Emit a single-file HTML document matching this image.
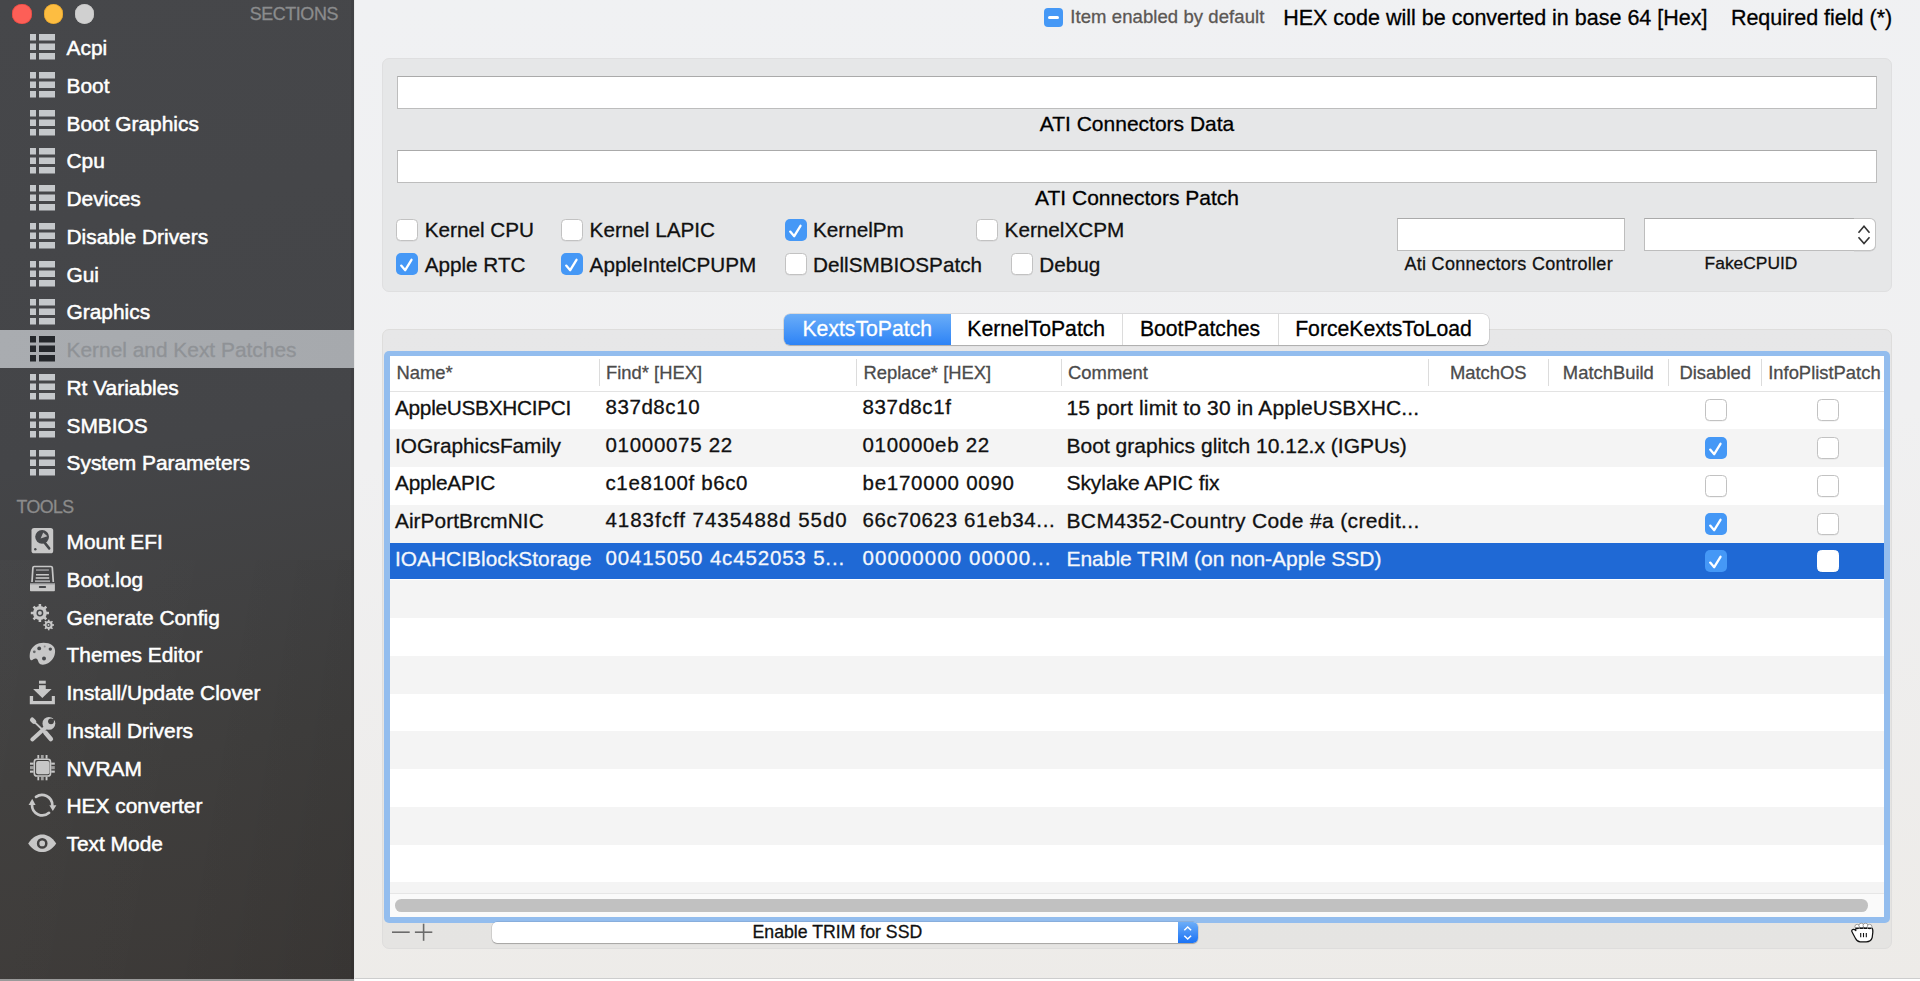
<!DOCTYPE html>
<html><head><meta charset="utf-8"><title>Clover Configurator</title>
<style>
html,body{margin:0;padding:0;width:1920px;height:981px;overflow:hidden;background:#f0f0f0;}
body{position:relative;font-family:"Liberation Sans",sans-serif;}
.r{position:absolute;}
.t{position:absolute;white-space:nowrap;-webkit-text-stroke-width:0.3px;}
.cb{position:absolute;background:#fff;border:1px solid #c2c2c2;border-radius:4.5px;box-shadow:0 0.5px 0.5px rgba(0,0,0,0.08);}
.cb.on{background:#4598f6;border:none;box-shadow:none;border-radius:5px;}
.cb svg{position:absolute;left:0;top:0;}
#tbl .t, #tbl .r, #tbl .cb{position:absolute;}
</style></head><body>
<div class="r" style="left:0px;top:0px;width:354px;height:981px;background:linear-gradient(170deg,#46474a 0%,#444548 45%,#3f3e3d 75%,#3c3937 100%);"></div>
<div class="r" style="left:0px;top:560px;width:354px;height:419px;background:linear-gradient(100deg,rgba(255,255,255,0.015) 0%,rgba(255,255,255,0) 55%,rgba(0,0,0,0.07) 100%);"></div>
<div class="r" style="left:351px;top:0px;width:3px;height:979px;background:rgba(0,0,0,0.06);"></div>
<div class="r" style="left:354px;top:0px;width:1px;height:979px;background:#e7e8e8;"></div>
<div class="r" style="left:0px;top:979px;width:354px;height:2px;background:#9a9a9a;"></div>
<div class="r" style="left:12.4px;top:4.4px;width:19.2px;height:19.2px;border-radius:50%;background:#fd5f57;box-shadow:inset 0 0 0 0.6px #e2463f;"></div>
<div class="r" style="left:43.7px;top:4.4px;width:19.2px;height:19.2px;border-radius:50%;background:#fdbd41;box-shadow:inset 0 0 0 0.6px #dfa02a;"></div>
<div class="r" style="left:75.2px;top:4.4px;width:19.2px;height:19.2px;border-radius:50%;background:#d0d0d0;box-shadow:inset 0 0 0 0.6px #c4c4c4;"></div>
<div class="t" style="left:249.7px;top:4.40px;font-size:17.9px;line-height:19.99px;color:#8b8c8d;letter-spacing:-0.4px;">SECTIONS</div>
<div class="r" style="left:30px;top:34.40px;"><svg width="26" height="27" viewBox="0 0 26 27"><g fill="#c5c8cb"><rect x="0" y="0" width="6" height="6.5"/><rect x="9" y="0" width="16" height="6.5"/><rect x="0" y="9.5" width="6" height="6.5"/><rect x="9" y="9.5" width="16" height="6.5"/><rect x="0" y="19" width="6" height="6.5"/><rect x="9" y="19" width="16" height="6.5"/></g></svg></div>
<div class="t" style="left:66.5px;top:36.08px;font-size:20.9px;line-height:23.35px;color:#ffffff;-webkit-text-stroke-width:0.5px;">Acpi</div>
<div class="r" style="left:30px;top:72.15px;"><svg width="26" height="27" viewBox="0 0 26 27"><g fill="#c5c8cb"><rect x="0" y="0" width="6" height="6.5"/><rect x="9" y="0" width="16" height="6.5"/><rect x="0" y="9.5" width="6" height="6.5"/><rect x="9" y="9.5" width="16" height="6.5"/><rect x="0" y="19" width="6" height="6.5"/><rect x="9" y="19" width="16" height="6.5"/></g></svg></div>
<div class="t" style="left:66.5px;top:73.83px;font-size:20.9px;line-height:23.35px;color:#ffffff;-webkit-text-stroke-width:0.5px;">Boot</div>
<div class="r" style="left:30px;top:109.90px;"><svg width="26" height="27" viewBox="0 0 26 27"><g fill="#c5c8cb"><rect x="0" y="0" width="6" height="6.5"/><rect x="9" y="0" width="16" height="6.5"/><rect x="0" y="9.5" width="6" height="6.5"/><rect x="9" y="9.5" width="16" height="6.5"/><rect x="0" y="19" width="6" height="6.5"/><rect x="9" y="19" width="16" height="6.5"/></g></svg></div>
<div class="t" style="left:66.5px;top:111.58px;font-size:20.9px;line-height:23.35px;color:#ffffff;-webkit-text-stroke-width:0.5px;">Boot Graphics</div>
<div class="r" style="left:30px;top:147.65px;"><svg width="26" height="27" viewBox="0 0 26 27"><g fill="#c5c8cb"><rect x="0" y="0" width="6" height="6.5"/><rect x="9" y="0" width="16" height="6.5"/><rect x="0" y="9.5" width="6" height="6.5"/><rect x="9" y="9.5" width="16" height="6.5"/><rect x="0" y="19" width="6" height="6.5"/><rect x="9" y="19" width="16" height="6.5"/></g></svg></div>
<div class="t" style="left:66.5px;top:149.33px;font-size:20.9px;line-height:23.35px;color:#ffffff;-webkit-text-stroke-width:0.5px;">Cpu</div>
<div class="r" style="left:30px;top:185.40px;"><svg width="26" height="27" viewBox="0 0 26 27"><g fill="#c5c8cb"><rect x="0" y="0" width="6" height="6.5"/><rect x="9" y="0" width="16" height="6.5"/><rect x="0" y="9.5" width="6" height="6.5"/><rect x="9" y="9.5" width="16" height="6.5"/><rect x="0" y="19" width="6" height="6.5"/><rect x="9" y="19" width="16" height="6.5"/></g></svg></div>
<div class="t" style="left:66.5px;top:187.08px;font-size:20.9px;line-height:23.35px;color:#ffffff;-webkit-text-stroke-width:0.5px;">Devices</div>
<div class="r" style="left:30px;top:223.15px;"><svg width="26" height="27" viewBox="0 0 26 27"><g fill="#c5c8cb"><rect x="0" y="0" width="6" height="6.5"/><rect x="9" y="0" width="16" height="6.5"/><rect x="0" y="9.5" width="6" height="6.5"/><rect x="9" y="9.5" width="16" height="6.5"/><rect x="0" y="19" width="6" height="6.5"/><rect x="9" y="19" width="16" height="6.5"/></g></svg></div>
<div class="t" style="left:66.5px;top:224.83px;font-size:20.9px;line-height:23.35px;color:#ffffff;-webkit-text-stroke-width:0.5px;">Disable Drivers</div>
<div class="r" style="left:30px;top:260.90px;"><svg width="26" height="27" viewBox="0 0 26 27"><g fill="#c5c8cb"><rect x="0" y="0" width="6" height="6.5"/><rect x="9" y="0" width="16" height="6.5"/><rect x="0" y="9.5" width="6" height="6.5"/><rect x="9" y="9.5" width="16" height="6.5"/><rect x="0" y="19" width="6" height="6.5"/><rect x="9" y="19" width="16" height="6.5"/></g></svg></div>
<div class="t" style="left:66.5px;top:262.58px;font-size:20.9px;line-height:23.35px;color:#ffffff;-webkit-text-stroke-width:0.5px;">Gui</div>
<div class="r" style="left:30px;top:298.65px;"><svg width="26" height="27" viewBox="0 0 26 27"><g fill="#c5c8cb"><rect x="0" y="0" width="6" height="6.5"/><rect x="9" y="0" width="16" height="6.5"/><rect x="0" y="9.5" width="6" height="6.5"/><rect x="9" y="9.5" width="16" height="6.5"/><rect x="0" y="19" width="6" height="6.5"/><rect x="9" y="19" width="16" height="6.5"/></g></svg></div>
<div class="t" style="left:66.5px;top:300.33px;font-size:20.9px;line-height:23.35px;color:#ffffff;-webkit-text-stroke-width:0.5px;">Graphics</div>
<div class="r" style="left:0px;top:330.0px;width:354px;height:38px;background:linear-gradient(100deg,#a9acb0,#a6a9ad);"></div>
<div class="r" style="left:30px;top:336.40px;"><svg width="26" height="27" viewBox="0 0 26 27"><g fill="#24272b"><rect x="0" y="0" width="6" height="6.5"/><rect x="9" y="0" width="16" height="6.5"/><rect x="0" y="9.5" width="6" height="6.5"/><rect x="9" y="9.5" width="16" height="6.5"/><rect x="0" y="19" width="6" height="6.5"/><rect x="9" y="19" width="16" height="6.5"/></g></svg></div>
<div class="t" style="left:66.5px;top:338.08px;font-size:20.9px;line-height:23.35px;color:#8f9296;">Kernel and Kext Patches</div>
<div class="r" style="left:30px;top:374.15px;"><svg width="26" height="27" viewBox="0 0 26 27"><g fill="#c5c8cb"><rect x="0" y="0" width="6" height="6.5"/><rect x="9" y="0" width="16" height="6.5"/><rect x="0" y="9.5" width="6" height="6.5"/><rect x="9" y="9.5" width="16" height="6.5"/><rect x="0" y="19" width="6" height="6.5"/><rect x="9" y="19" width="16" height="6.5"/></g></svg></div>
<div class="t" style="left:66.5px;top:375.83px;font-size:20.9px;line-height:23.35px;color:#ffffff;-webkit-text-stroke-width:0.5px;">Rt Variables</div>
<div class="r" style="left:30px;top:411.90px;"><svg width="26" height="27" viewBox="0 0 26 27"><g fill="#c5c8cb"><rect x="0" y="0" width="6" height="6.5"/><rect x="9" y="0" width="16" height="6.5"/><rect x="0" y="9.5" width="6" height="6.5"/><rect x="9" y="9.5" width="16" height="6.5"/><rect x="0" y="19" width="6" height="6.5"/><rect x="9" y="19" width="16" height="6.5"/></g></svg></div>
<div class="t" style="left:66.5px;top:413.58px;font-size:20.9px;line-height:23.35px;color:#ffffff;-webkit-text-stroke-width:0.5px;">SMBIOS</div>
<div class="r" style="left:30px;top:449.65px;"><svg width="26" height="27" viewBox="0 0 26 27"><g fill="#c5c8cb"><rect x="0" y="0" width="6" height="6.5"/><rect x="9" y="0" width="16" height="6.5"/><rect x="0" y="9.5" width="6" height="6.5"/><rect x="9" y="9.5" width="16" height="6.5"/><rect x="0" y="19" width="6" height="6.5"/><rect x="9" y="19" width="16" height="6.5"/></g></svg></div>
<div class="t" style="left:66.5px;top:451.33px;font-size:20.9px;line-height:23.35px;color:#ffffff;-webkit-text-stroke-width:0.5px;">System Parameters</div>
<div class="t" style="left:16.5px;top:497.89px;font-size:17.8px;line-height:19.88px;color:#8b8b8b;letter-spacing:-0.6px;">TOOLS</div>
<div class="r" style="left:26px;top:522.00px;"><svg width="34" height="38" viewBox="0 0 34 38"><rect x="5.5" y="6" width="21.7" height="25.3" rx="2.6" fill="#c7c7c7"/><circle cx="16.1" cy="14.8" r="6.9" fill="#46484b"/><path d="M14.6 16.4 L17.2 10.6 L21.4 14.3 Z" fill="#c7c7c7" opacity="0.9"/><path d="M17 18.6 L23.2 26.4" stroke="#46484b" stroke-width="2.5" stroke-linecap="round"/><circle cx="9.3" cy="27.3" r="1.2" fill="#46484b"/></svg></div>
<div class="t" style="left:66.5px;top:530.08px;font-size:20.9px;line-height:23.35px;color:#ffffff;-webkit-text-stroke-width:0.5px;">Mount EFI</div>
<div class="r" style="left:26px;top:559.75px;"><svg width="34" height="38" viewBox="0 0 34 38"><path d="M6 22 L6.9 7.6 Q7 6.5 8.2 6.5 L25 6.5 Q26.2 6.5 26.3 7.6 L27.3 22" fill="none" stroke="#c7c7c7" stroke-width="1.7"/><rect x="10" y="9.2" width="12.9" height="1.7" fill="#8f9092"/><rect x="10" y="14" width="12.9" height="1.5" fill="#c7c7c7"/><rect x="9.7" y="17.2" width="13.5" height="1.6" fill="#c7c7c7"/><rect x="9" y="20.3" width="15" height="1.8" fill="#a9aaac"/><rect x="4" y="23" width="24.9" height="8.2" rx="0.8" fill="#c7c7c7"/><rect x="4" y="23" width="24.9" height="1.4" fill="#8f9092"/><rect x="12.8" y="26.1" width="7.3" height="1.8" rx="0.9" fill="#46484b"/></svg></div>
<div class="t" style="left:66.5px;top:567.83px;font-size:20.9px;line-height:23.35px;color:#ffffff;-webkit-text-stroke-width:0.5px;">Boot.log</div>
<div class="r" style="left:26px;top:597.50px;"><svg width="34" height="38" viewBox="0 0 34 38"><g fill="#c7c7c7"><circle cx="13.9" cy="15" r="6.9"/><rect x="12.6" y="5.9" width="2.6" height="3.6" rx="0.4" transform="rotate(0 13.9 15)"/><rect x="12.6" y="5.9" width="2.6" height="3.6" rx="0.4" transform="rotate(45 13.9 15)"/><rect x="12.6" y="5.9" width="2.6" height="3.6" rx="0.4" transform="rotate(90 13.9 15)"/><rect x="12.6" y="5.9" width="2.6" height="3.6" rx="0.4" transform="rotate(135 13.9 15)"/><rect x="12.6" y="5.9" width="2.6" height="3.6" rx="0.4" transform="rotate(180 13.9 15)"/><rect x="12.6" y="5.9" width="2.6" height="3.6" rx="0.4" transform="rotate(225 13.9 15)"/><rect x="12.6" y="5.9" width="2.6" height="3.6" rx="0.4" transform="rotate(270 13.9 15)"/><rect x="12.6" y="5.9" width="2.6" height="3.6" rx="0.4" transform="rotate(315 13.9 15)"/><circle cx="22.7" cy="27" r="3.9"/><rect x="21.9" y="21.7" width="1.6" height="2" transform="rotate(0 22.7 27)"/><rect x="21.9" y="21.7" width="1.6" height="2" transform="rotate(45 22.7 27)"/><rect x="21.9" y="21.7" width="1.6" height="2" transform="rotate(90 22.7 27)"/><rect x="21.9" y="21.7" width="1.6" height="2" transform="rotate(135 22.7 27)"/><rect x="21.9" y="21.7" width="1.6" height="2" transform="rotate(180 22.7 27)"/><rect x="21.9" y="21.7" width="1.6" height="2" transform="rotate(225 22.7 27)"/><rect x="21.9" y="21.7" width="1.6" height="2" transform="rotate(270 22.7 27)"/><rect x="21.9" y="21.7" width="1.6" height="2" transform="rotate(315 22.7 27)"/></g><circle cx="13.9" cy="15" r="2.7" fill="none" stroke="#46484b" stroke-width="1.5"/><circle cx="22.5" cy="27" r="1.5" fill="none" stroke="#46484b" stroke-width="1.1"/></svg></div>
<div class="t" style="left:66.5px;top:605.58px;font-size:20.9px;line-height:23.35px;color:#ffffff;-webkit-text-stroke-width:0.5px;">Generate Config</div>
<div class="r" style="left:26px;top:635.25px;"><svg width="34" height="38" viewBox="0 0 34 38"><path d="M4.2 17 C6 11 11.5 7.8 17.5 7.8 C24.5 7.8 29.1 11 29.1 16 C29.1 21.5 26.2 25.8 22 28.3 C18.5 30.3 14 30.2 12.8 27.8 C11.8 25.8 11.8 24 10 23.6 C8 23.2 6.6 25.6 5 25.2 C3.6 24.8 3.3 20.5 4.2 17 Z" fill="#c7c7c7"/><circle cx="13.2" cy="13.4" r="1.9" fill="#46484b"/><circle cx="24.3" cy="14.1" r="1.7" fill="#46484b"/><circle cx="8.3" cy="16.8" r="1.4" fill="#46484b" opacity="0.75"/><circle cx="18.7" cy="11.6" r="1" fill="#46484b" opacity="0.45"/><circle cx="18" cy="23.4" r="2" fill="#46484b"/></svg></div>
<div class="t" style="left:66.5px;top:643.33px;font-size:20.9px;line-height:23.35px;color:#ffffff;-webkit-text-stroke-width:0.5px;">Themes Editor</div>
<div class="r" style="left:26px;top:673.00px;"><svg width="34" height="38" viewBox="0 0 34 38"><g fill="#c7c7c7"><rect x="13" y="7.7" width="6.75" height="3"/><rect x="13" y="12.2" width="6.75" height="4.2"/><path d="M7.1 16 L25.6 16 L16.35 25 Z"/><path d="M3.8 23 H7.1 V28 H25.8 V23 H28.9 V31.3 H3.8 Z"/></g></svg></div>
<div class="t" style="left:66.5px;top:681.08px;font-size:20.9px;line-height:23.35px;color:#ffffff;-webkit-text-stroke-width:0.5px;">Install/Update Clover</div>
<div class="r" style="left:26px;top:710.75px;"><svg width="34" height="38" viewBox="0 0 34 38"><defs><mask id="wm"><rect x="0" y="0" width="34" height="38" fill="#fff"/><circle cx="25" cy="10.3" r="2.9" fill="#000"/><path d="M25 10.3 L31 3.5 L34 8 Z" fill="#000"/></mask></defs><g stroke="#c7c7c7" stroke-linecap="round"><path d="M6.2 8.8 L8 10.6" stroke-width="4.6"/><path d="M7 9.6 L17.5 19.8" stroke-width="1.9"/><path d="M19.3 21.6 L24.8 28" stroke-width="4.6"/><path d="M19.5 16.5 L6.3 28.4" stroke-width="4"/></g><circle cx="22.9" cy="12.4" r="6.4" fill="#c7c7c7" mask="url(#wm)"/></svg></div>
<div class="t" style="left:66.5px;top:718.83px;font-size:20.9px;line-height:23.35px;color:#ffffff;-webkit-text-stroke-width:0.5px;">Install Drivers</div>
<div class="r" style="left:26px;top:748.50px;"><svg width="34" height="38" viewBox="0 0 34 38"><g fill="#c7c7c7"><rect x="8.3" y="10.3" width="16.2" height="16.7" rx="2.6" fill="none" stroke="#c7c7c7" stroke-width="1.6"/><rect x="10.1" y="12" width="13.4" height="13.3" rx="2"/><rect x="11.4" y="6" width="1.8" height="3.6"/><rect x="14.9" y="6" width="2.8" height="3.6" opacity="0.7"/><rect x="19.6" y="6" width="1.9" height="3.6"/><rect x="11.4" y="27.7" width="1.8" height="3.6"/><rect x="14.9" y="27.7" width="2.8" height="3.6" opacity="0.7"/><rect x="19.6" y="27.7" width="1.9" height="3.6"/><rect x="4" y="13.6" width="3.6" height="2.1"/><rect x="4" y="17.1" width="3.6" height="3.1" opacity="0.7"/><rect x="4" y="21.6" width="3.6" height="2.1"/><rect x="25.2" y="13.6" width="3.6" height="2.1"/><rect x="25.2" y="17.1" width="3.6" height="3.1" opacity="0.7"/><rect x="25.2" y="21.6" width="3.6" height="2.1"/></g></svg></div>
<div class="t" style="left:66.5px;top:756.58px;font-size:20.9px;line-height:23.35px;color:#ffffff;-webkit-text-stroke-width:0.5px;">NVRAM</div>
<div class="r" style="left:26px;top:786.25px;"><svg width="34" height="38" viewBox="0 0 34 38"><g fill="none" stroke="#c7c7c7" stroke-width="2.7" stroke-linecap="round"><path d="M10.02 10.89 A10.3 10.3 0 0 1 26.30 19.05"/><path d="M23.06 26.82 A10.3 10.3 0 0 1 6.00 19.05"/></g><path d="M23.4 19.2 L30.4 19.2 L26.8 24.9 Z" fill="#c7c7c7"/><path d="M2.6 19 L9.6 19 L6.2 12.7 Z" fill="#c7c7c7"/></svg></div>
<div class="t" style="left:66.5px;top:794.33px;font-size:20.9px;line-height:23.35px;color:#ffffff;-webkit-text-stroke-width:0.5px;">HEX converter</div>
<div class="r" style="left:26px;top:824.00px;"><svg width="34" height="38" viewBox="0 0 34 38"><path d="M2.2 19.4 C6.5 13 11.5 10.5 16.2 10.5 C20.9 10.5 25.9 13 30.2 19.4 C25.9 25.6 20.9 28.1 16.2 28.1 C11.5 28.1 6.5 25.6 2.2 19.4 Z" fill="#c7c7c7"/><circle cx="16.2" cy="19.4" r="4.1" fill="none" stroke="#434242" stroke-width="2.5"/></svg></div>
<div class="t" style="left:66.5px;top:832.08px;font-size:20.9px;line-height:23.35px;color:#ffffff;-webkit-text-stroke-width:0.5px;">Text Mode</div>
<div class="r" style="left:355px;top:0px;width:1565px;height:979px;background:linear-gradient(178deg,#f0f1f3 0%,#f0f0f1 45%,#edebe8 100%);"></div>
<div class="r" style="left:355px;top:979px;width:1565px;height:2px;background:#fff;"></div>
<div class="r" style="left:355px;top:978px;width:1565px;height:1px;background:#cdcdcd;"></div>
<div class="cb on" style="left:1044px;top:8px;width:19px;height:19px;border-radius:4px;"><div style="position:absolute;left:4px;top:8px;width:11px;height:3px;border-radius:1.5px;background:#fff"></div></div>
<div class="t" style="left:1070.3px;top:7.05px;font-size:18.5px;line-height:20.66px;color:#5b5754;letter-spacing:0.08px;">Item enabled by default</div>
<div class="t" style="left:1283.2px;top:5.54px;font-size:21.5px;line-height:24.02px;color:#000;">HEX code will be converted in base 64 [Hex]</div>
<div class="t" style="left:1730.9px;top:5.54px;font-size:21.5px;line-height:24.02px;color:#000;">Required field (*)</div>
<div class="r" style="left:382px;top:58px;width:1510px;height:234px;background:#e6e7e8;border:1px solid #dfdfe0;border-radius:7px;box-sizing:border-box;"></div>
<div class="r" style="left:397px;top:76px;width:1480px;height:33px;background:#fff;border:1px solid #bdbdbd;border-top-color:#aaaaaa;box-sizing:border-box;"></div>
<div class="t" style="left:382px;top:112.09px;font-size:21.0px;line-height:23.46px;color:#000;width:1510px;text-align:center;">ATI Connectors Data</div>
<div class="r" style="left:397px;top:150px;width:1480px;height:33px;background:#fff;border:1px solid #bdbdbd;border-top-color:#aaaaaa;box-sizing:border-box;"></div>
<div class="t" style="left:382px;top:186.09px;font-size:21.0px;line-height:23.46px;color:#000;width:1510px;text-align:center;">ATI Connectors Patch</div>
<div class="cb" style="left:396px;top:218.5px;width:20px;height:20px"></div>
<div class="t" style="left:424.7px;top:218.46px;font-size:20.7px;line-height:23.12px;color:#111;">Kernel CPU</div>
<div class="cb" style="left:561.3px;top:218.5px;width:20px;height:20px"></div>
<div class="t" style="left:589.6px;top:218.46px;font-size:20.7px;line-height:23.12px;color:#111;">Kernel LAPIC</div>
<div class="cb on" style="left:784.7px;top:218.5px;width:22px;height:22px"><svg width="22" height="22" viewBox="0 0 22 22"><path d="M5.2 12.6 L9.2 17.2 L15.5 6.8" fill="none" stroke="#fff" stroke-width="2.3" stroke-linecap="round" stroke-linejoin="round"/></svg></div>
<div class="t" style="left:813.0px;top:218.46px;font-size:20.7px;line-height:23.12px;color:#111;">KernelPm</div>
<div class="cb" style="left:976.3px;top:218.5px;width:20px;height:20px"></div>
<div class="t" style="left:1004.6px;top:218.46px;font-size:20.7px;line-height:23.12px;color:#111;">KernelXCPM</div>
<div class="cb on" style="left:396px;top:253.2px;width:22px;height:22px"><svg width="22" height="22" viewBox="0 0 22 22"><path d="M5.2 12.6 L9.2 17.2 L15.5 6.8" fill="none" stroke="#fff" stroke-width="2.3" stroke-linecap="round" stroke-linejoin="round"/></svg></div>
<div class="t" style="left:424.7px;top:253.16px;font-size:20.7px;line-height:23.12px;color:#111;">Apple RTC</div>
<div class="cb on" style="left:561.3px;top:253.2px;width:22px;height:22px"><svg width="22" height="22" viewBox="0 0 22 22"><path d="M5.2 12.6 L9.2 17.2 L15.5 6.8" fill="none" stroke="#fff" stroke-width="2.3" stroke-linecap="round" stroke-linejoin="round"/></svg></div>
<div class="t" style="left:589.6px;top:253.16px;font-size:20.7px;line-height:23.12px;color:#111;">AppleIntelCPUPM</div>
<div class="cb" style="left:784.7px;top:253.2px;width:20px;height:20px"></div>
<div class="t" style="left:813.0px;top:253.16px;font-size:20.7px;line-height:23.12px;color:#111;">DellSMBIOSPatch</div>
<div class="cb" style="left:1011.4px;top:253.2px;width:20px;height:20px"></div>
<div class="t" style="left:1039.3px;top:253.16px;font-size:20.7px;line-height:23.12px;color:#111;">Debug</div>
<div class="r" style="left:1397px;top:218px;width:228px;height:33px;background:#fff;border:1px solid #bdbdbd;border-top-color:#aaaaaa;box-sizing:border-box;"></div>
<div class="t" style="left:1394.7px;top:253.90px;font-size:18px;line-height:20.11px;color:#111;width:228px;text-align:center;letter-spacing:0.3px;">Ati Connectors Controller</div>
<div class="r" style="left:1644px;top:218px;width:211px;height:33px;background:#fff;border:1px solid #bdbdbd;border-top-color:#aaaaaa;box-sizing:border-box;"></div>
<div class="r" style="left:1854px;top:218px;width:22px;height:33px;background:#fff;border:1px solid #c3c3c3;border-left:none;border-radius:0 6px 6px 0;box-sizing:border-box;box-shadow:0 0.5px 0.5px rgba(0,0,0,0.12);"><svg width="22" height="33" viewBox="0 0 22 33" style="position:absolute;left:-1px;top:-1px"><path d="M5.5 14.7 L11 8.3 L16.5 14.7" fill="none" stroke="#333" stroke-width="1.6"/><path d="M5.5 19.2 L11 25.6 L16.5 19.2" fill="none" stroke="#333" stroke-width="1.6"/></svg></div>
<div class="t" style="left:1645.5px;top:254.45px;font-size:17.4px;line-height:19.44px;color:#111;width:211px;text-align:center;">FakeCPUID</div>
<div class="r" style="left:382px;top:329px;width:1510px;height:620px;background:linear-gradient(180deg,#e7e7e8,#e5e4e2);border:1px solid #dedddc;border-radius:7px;box-sizing:border-box;"></div>
<div class="r" style="left:784px;top:313.5px;width:705px;height:31.5px;background:#fff;border-radius:6px;box-shadow:0 0 0 0.5px rgba(0,0,0,0.18),0 1px 1px rgba(0,0,0,0.18);"></div>
<div class="r" style="left:784px;top:313.5px;width:166.5px;height:31.5px;background:linear-gradient(180deg,#6aadf8,#2d83f6);border-radius:6px 0 0 6px;"></div>
<div class="r" style="left:1122px;top:314px;width:1px;height:31px;background:#dcdcdc;"></div>
<div class="r" style="left:1278px;top:314px;width:1px;height:31px;background:#dcdcdc;"></div>
<div class="t" style="left:784px;top:317.11px;font-size:21.2px;line-height:23.68px;color:#fff;width:166.5px;text-align:center;">KextsToPatch</div>
<div class="t" style="left:950.5px;top:317.11px;font-size:21.2px;line-height:23.68px;color:#000;width:171.5px;text-align:center;">KernelToPatch</div>
<div class="t" style="left:1122px;top:317.11px;font-size:21.2px;line-height:23.68px;color:#000;width:156px;text-align:center;">BootPatches</div>
<div class="t" style="left:1278px;top:317.11px;font-size:21.2px;line-height:23.68px;color:#000;width:211px;text-align:center;">ForceKextsToLoad</div>
<div class="r" style="left:384px;top:351px;width:1506px;height:571.5px;background:#93bdee;border-radius:5px;"></div>
<div class="r" style="left:389.8px;top:356px;width:1494.4px;height:561px;background:#fff;overflow:hidden;" id="tbl">
<div class="t" style="left:6.599999999999989px;top:7.34px;font-size:18.4px;line-height:20.55px;color:#4b4b4b;">Name*</div>
<div class="t" style="left:216.20000000000002px;top:7.34px;font-size:18.4px;line-height:20.55px;color:#4b4b4b;">Find* [HEX]</div>
<div class="t" style="left:473.59999999999997px;top:7.34px;font-size:18.4px;line-height:20.55px;color:#4b4b4b;">Replace* [HEX]</div>
<div class="t" style="left:678.3000000000001px;top:7.34px;font-size:18.4px;line-height:20.55px;color:#4b4b4b;">Comment</div>
<div class="t" style="left:1038.7px;top:7.34px;font-size:18.4px;line-height:20.55px;color:#4b4b4b;width:119.59999999999991px;text-align:center;">MatchOS</div>
<div class="t" style="left:1158.3px;top:7.34px;font-size:18.4px;line-height:20.55px;color:#4b4b4b;width:120.5px;text-align:center;">MatchBuild</div>
<div class="t" style="left:1278.8px;top:7.34px;font-size:18.4px;line-height:20.55px;color:#4b4b4b;width:93.20000000000005px;text-align:center;">Disabled</div>
<div class="t" style="left:1378.4px;top:7.34px;font-size:18.4px;line-height:20.55px;color:#4b4b4b;">InfoPlistPatch</div>
<div class="r" style="left:209.3px;top:3.3000000000000114px;width:1px;height:27px;background:#dcdcdc;"></div>
<div class="r" style="left:466.7px;top:3.3000000000000114px;width:1px;height:27px;background:#dcdcdc;"></div>
<div class="r" style="left:671.4000000000001px;top:3.3000000000000114px;width:1px;height:27px;background:#dcdcdc;"></div>
<div class="r" style="left:1038.2px;top:3.3000000000000114px;width:1px;height:27px;background:#dcdcdc;"></div>
<div class="r" style="left:1157.8px;top:3.3000000000000114px;width:1px;height:27px;background:#dcdcdc;"></div>
<div class="r" style="left:1278.3px;top:3.3000000000000114px;width:1px;height:27px;background:#dcdcdc;"></div>
<div class="r" style="left:1371.5px;top:3.3000000000000114px;width:1px;height:27px;background:#dcdcdc;"></div>
<div class="r" style="left:0px;top:34.80000000000001px;width:1495px;height:1.2px;background:#e3e3e3;"></div>
<div class="r" style="left:0px;top:73.35000000000002px;width:1495px;height:37.75px;background:#f4f4f4;"></div>
<div class="r" style="left:0px;top:148.85000000000002px;width:1495px;height:37.75px;background:#f4f4f4;"></div>
<div class="r" style="left:0px;top:224.35000000000002px;width:1495px;height:37.75px;background:#f4f4f4;"></div>
<div class="r" style="left:0px;top:299.85px;width:1495px;height:37.75px;background:#f4f4f4;"></div>
<div class="r" style="left:0px;top:375.35px;width:1495px;height:37.75px;background:#f4f4f4;"></div>
<div class="r" style="left:0px;top:450.85px;width:1495px;height:37.75px;background:#f4f4f4;"></div>
<div class="r" style="left:0px;top:526.35px;width:1495px;height:37.75px;background:#f4f4f4;"></div>
<div class="t" style="left:5.199999999999989px;top:39.97px;font-size:20.8px;line-height:23.23px;color:#111;letter-spacing:-0.286px;">AppleUSBXHCIPCI</div>
<div class="t" style="left:215.7px;top:40.24px;font-size:20.5px;line-height:22.90px;color:#111;letter-spacing:0.571px;">837d8c10</div>
<div class="t" style="left:472.7px;top:40.24px;font-size:20.5px;line-height:22.90px;color:#111;letter-spacing:0.571px;">837d8c1f</div>
<div class="t" style="left:676.7px;top:39.79px;font-size:21.0px;line-height:23.46px;color:#111;letter-spacing:0.167px;">15 port limit to 30 in AppleUSBXHC...</div>
<div class="cb" style="left:1314.8px;top:43.400000000000034px;width:20px;height:20px"></div>
<div class="cb" style="left:1427.2px;top:43.400000000000034px;width:20px;height:20px"></div>
<div class="t" style="left:5.199999999999989px;top:77.72px;font-size:20.8px;line-height:23.23px;color:#111;letter-spacing:-0.027px;">IOGraphicsFamily</div>
<div class="t" style="left:215.7px;top:77.99px;font-size:20.5px;line-height:22.90px;color:#111;letter-spacing:0.700px;">01000075 22</div>
<div class="t" style="left:472.7px;top:77.99px;font-size:20.5px;line-height:22.90px;color:#111;letter-spacing:0.700px;">010000eb 22</div>
<div class="t" style="left:676.7px;top:77.54px;font-size:21.0px;line-height:23.46px;color:#111;letter-spacing:0.017px;">Boot graphics glitch 10.12.x (IGPUs)</div>
<div class="cb on" style="left:1314.8px;top:81.15000000000003px;width:22px;height:22px"><svg width="22" height="22" viewBox="0 0 22 22"><path d="M5.2 12.6 L9.2 17.2 L15.5 6.8" fill="none" stroke="#fff" stroke-width="2.3" stroke-linecap="round" stroke-linejoin="round"/></svg></div>
<div class="cb" style="left:1427.2px;top:81.15000000000003px;width:20px;height:20px"></div>
<div class="t" style="left:5.199999999999989px;top:115.47px;font-size:20.8px;line-height:23.23px;color:#111;letter-spacing:-0.175px;">AppleAPIC</div>
<div class="t" style="left:215.7px;top:115.74px;font-size:20.5px;line-height:22.90px;color:#111;letter-spacing:0.625px;">c1e8100f b6c0</div>
<div class="t" style="left:472.7px;top:115.74px;font-size:20.5px;line-height:22.90px;color:#111;letter-spacing:0.750px;">be170000 0090</div>
<div class="t" style="left:676.7px;top:115.29px;font-size:21.0px;line-height:23.46px;color:#111;letter-spacing:-0.067px;">Skylake APIC fix</div>
<div class="cb" style="left:1314.8px;top:118.90000000000003px;width:20px;height:20px"></div>
<div class="cb" style="left:1427.2px;top:118.90000000000003px;width:20px;height:20px"></div>
<div class="t" style="left:5.199999999999989px;top:153.22px;font-size:20.8px;line-height:23.23px;color:#111;letter-spacing:0.062px;">AirPortBrcmNIC</div>
<div class="t" style="left:215.7px;top:153.49px;font-size:20.5px;line-height:22.90px;color:#111;letter-spacing:0.976px;">4183fcff 7435488d 55d0</div>
<div class="t" style="left:472.7px;top:153.49px;font-size:20.5px;line-height:22.90px;color:#111;letter-spacing:0.647px;">66c70623 61eb34...</div>
<div class="t" style="left:676.7px;top:153.04px;font-size:21.0px;line-height:23.46px;color:#111;letter-spacing:0.364px;">BCM4352-Country Code #a (credit...</div>
<div class="cb on" style="left:1314.8px;top:156.6500000000001px;width:22px;height:22px"><svg width="22" height="22" viewBox="0 0 22 22"><path d="M5.2 12.6 L9.2 17.2 L15.5 6.8" fill="none" stroke="#fff" stroke-width="2.3" stroke-linecap="round" stroke-linejoin="round"/></svg></div>
<div class="cb" style="left:1427.2px;top:156.6500000000001px;width:20px;height:20px"></div>
<div class="r" style="left:0px;top:186.70000000000005px;width:1495px;height:35.9px;background:#1f69d5;"></div>
<div class="t" style="left:5.199999999999989px;top:190.97px;font-size:20.8px;line-height:23.23px;color:#f4f7fc;letter-spacing:0.071px;">IOAHCIBlockStorage</div>
<div class="t" style="left:215.7px;top:191.24px;font-size:20.5px;line-height:22.90px;color:#f4f7fc;letter-spacing:0.833px;">00415050 4c452053 5...</div>
<div class="t" style="left:472.7px;top:191.24px;font-size:20.5px;line-height:22.90px;color:#f4f7fc;letter-spacing:1.062px;">00000000 00000...</div>
<div class="t" style="left:676.7px;top:190.79px;font-size:21.0px;line-height:23.46px;color:#f4f7fc;letter-spacing:-0.034px;">Enable TRIM (on non-Apple SSD)</div>
<div class="cb on" style="left:1314.8px;top:194.4000000000001px;width:22px;height:22px"><svg width="22" height="22" viewBox="0 0 22 22"><path d="M5.2 12.6 L9.2 17.2 L15.5 6.8" fill="none" stroke="#fff" stroke-width="2.3" stroke-linecap="round" stroke-linejoin="round"/></svg></div>
<div class="cb" style="left:1427.20px;top:194.40px;width:20px;height:20px;border-color:#fff;"></div>
<div class="r" style="left:0px;top:537.4px;width:1495px;height:1px;background:#e6e6e6;"></div>
<div class="r" style="left:0px;top:538.4px;width:1495px;height:30px;background:#fafafa;"></div>
<div class="r" style="left:5.0px;top:543.2px;width:1473.2px;height:12.6px;background:#c1c1c1;border-radius:6.3px;"></div>
</div>
<svg class="r" style="left:390px;top:920px" width="46" height="24" viewBox="0 0 46 24"><g stroke="#6b6b6b" stroke-width="1.6"><path d="M2 12.2 L19.7 12.2"/><path d="M24.9 12.2 L42.3 12.2"/><path d="M33.6 3.7 L33.6 20.8"/></g></svg>
<div class="r" style="left:491.5px;top:921.5px;width:706px;height:21.5px;background:#fff;border-radius:5px;box-shadow:0 0 0 0.5px rgba(0,0,0,0.15),0 1px 1px rgba(0,0,0,0.22);"></div>
<div class="r" style="left:1178px;top:921.5px;width:19.5px;height:21.5px;background:linear-gradient(180deg,#6cadf8,#1a72f5);border-radius:0 5px 5px 0;"><svg width="20" height="22" viewBox="0 0 20 22" style="position:absolute;left:0;top:0"><path d="M6.3 8.3 L9.7 5 L13.1 8.3" fill="none" stroke="#fff" stroke-width="1.5"/><path d="M6.3 13.7 L9.7 17 L13.1 13.7" fill="none" stroke="#fff" stroke-width="1.5"/></svg></div>
<div class="t" style="left:752.5px;top:922.58px;font-size:17.7px;line-height:19.77px;color:#111;">Enable TRIM for SSD</div>
<svg class="r" style="left:1849px;top:921px" width="26" height="24" viewBox="0 0 26 24"><path d="M3.2 11.2 C1.8 9.6 3.6 7.6 5.6 8.6 L6.8 9.6 L6.8 6.8 L22.6 6.8 C23.8 7.6 24 9.5 23.8 11.5 L23.2 16.5 C22.3 19.6 20.2 20.8 17.2 20.8 L11.2 20.8 C8.8 20.8 7.6 19.6 6.4 17.2 Z" fill="#fff" stroke="#111" stroke-width="1.25" stroke-linejoin="round"/><g fill="#fff" stroke="#8a8a8a" stroke-width="0.8"><circle cx="8.2" cy="5.6" r="2.3"/><circle cx="12.3" cy="4.6" r="2.4"/><circle cx="16.5" cy="4.6" r="2.4"/><circle cx="20.6" cy="5.6" r="2.3"/></g><path d="M6.6 7.2 L22.8 7.2" stroke="#111" stroke-width="1.4" stroke-dasharray="3.2 0.9"/><g stroke="#111" stroke-width="1.1"><path d="M11.7 12 L11.7 16.2"/><path d="M14.5 12 L14.5 16.2"/><path d="M17.3 12 L17.3 16.2"/></g></svg>
</body></html>
